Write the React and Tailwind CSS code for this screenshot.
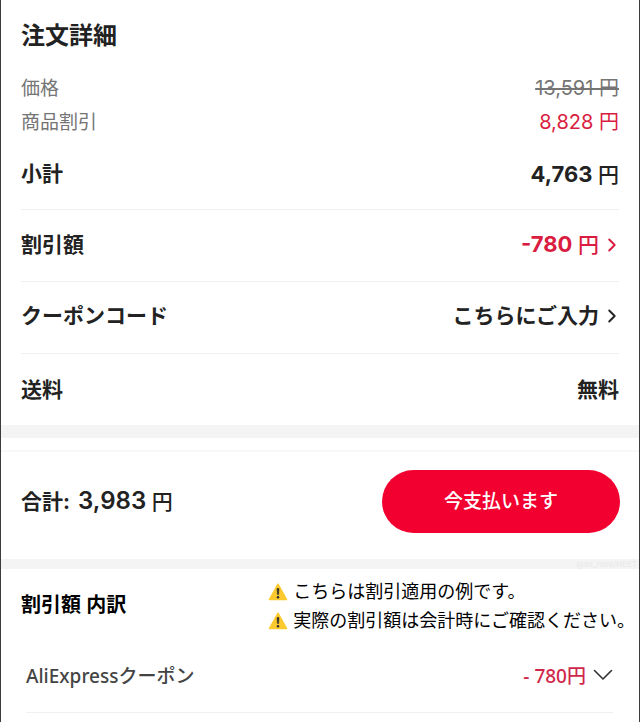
import React from 'react';

const WarningIcon = () => (
  <svg viewBox="0 0 20 18" className="h-[18px] w-5 shrink-0" aria-hidden="true">
    <path d="M10 1.2 18.6 16.6H1.4Z" fill="#fcc92e" stroke="#fcc92e" strokeWidth="1.4" strokeLinejoin="round" />
    <path d="M9 5.6h2l-.4 6H9.4Z" fill="#2b2b2b" stroke="#2b2b2b" strokeWidth=".5" strokeLinejoin="round" />
    <circle cx="10" cy="14.2" r="1.2" fill="#2b2b2b" />
  </svg>
);

const ArrowRight = () => (
  <svg viewBox="0 0 12 14" className="h-3.5 w-3" fill="none" stroke="currentColor" aria-hidden="true">
    <path d="M2.2 1.5 7.7 7l-5.5 5.5" strokeWidth="1.9" strokeLinecap="round" strokeLinejoin="round" />
  </svg>
);

const ArrowDown = () => (
  <svg viewBox="0 0 20 14" className="h-3.5 w-5 text-[#333]" fill="none" stroke="currentColor" aria-hidden="true">
    <path d="M1.5 1.5 10 10l8.5-8.5" strokeWidth="1.6" strokeLinecap="round" strokeLinejoin="round" />
  </svg>
);

const notes = [
  'こちらは割引適用の例です。',
  '実際の割引額は会計時にご確認ください。',
];

const App = () => {
  return (
    <main className="min-h-screen overflow-hidden border-x border-[#3c3c40] bg-white font-['Inter','Noto_Sans_CJK_JP',sans-serif] text-[21px] leading-8 font-medium text-[#222]">
      <section className="px-5 pt-4">
        <h1 className="text-2xl leading-10 font-bold">注文詳細</h1>
        <dl>
          <div className="mt-4 flex items-baseline justify-between text-[19px] font-normal">
            <dt className="text-[#757575]">価格</dt>
            <dd className="text-xl leading-8 text-[#757575] line-through">13,591 円</dd>
          </div>
          <div className="mt-px flex items-baseline justify-between text-[19px] font-normal">
            <dt className="text-[#757575]">商品割引</dt>
            <dd className="text-xl leading-8 text-[#d91c40]">8,828 円</dd>
          </div>
          <div className="flex h-[71px] items-center justify-between border-b border-[#f0f0f0]">
            <dt className="font-bold">小計</dt>
            <dd>
              <span className="text-[22px] font-bold">4,763</span> 円
            </dd>
          </div>
          <div className="flex h-[72px] items-center justify-between border-b border-[#f0f0f0] pb-0.5">
            <dt className="font-bold">割引額</dt>
            <dd>
              <button className="flex items-center gap-2 text-[#d91c40]">
                <span>
                  <span className="text-[22px] font-bold">-780</span> 円
                </span>
                <ArrowRight />
              </button>
            </dd>
          </div>
          <div className="flex h-[72px] items-center justify-between border-b border-[#f0f0f0] pb-1">
            <dt className="font-bold">クーポンコード</dt>
            <dd>
              <button className="flex items-center gap-2 font-bold">
                こちらにご入力
                <ArrowRight />
              </button>
            </dd>
          </div>
          <div className="flex h-[71px] items-center justify-between">
            <dt className="font-bold">送料</dt>
            <dd className="font-bold">無料</dd>
          </div>
        </dl>
      </section>

      <div className="h-[13px] bg-[#f4f4f4]" />

      <section className="mt-3 flex h-[109px] items-center justify-between border-t-2 border-[#f8f8f8] pr-[19px] pb-2 pl-5">
        <p className="flex items-baseline gap-2">
          <span className="font-bold">合計:</span>
          <span>
            <span className="text-2xl leading-8 font-semibold">3,983</span> 円
          </span>
        </p>
        <button className="h-[63px] w-[238px] rounded-full bg-[#f10030] text-[19px] font-medium text-white">
          今支払います
        </button>
      </section>

      <div className="h-2.5 bg-[#f4f4f4] pr-0.5 text-right text-[8px] leading-[10px] font-normal text-[#e9e9e9]">
        @ax_rova/NEET
      </div>

      <section className="font-['Noto_Sans','Noto_Sans_CJK_JP',sans-serif]">
        <div className="flex items-center justify-between pt-2 pl-5">
          <h2 className="pb-0.5 text-[20px] font-bold text-black">割引額 内訳</h2>
          <ul className="pr-1 text-lg leading-[29px] font-normal whitespace-nowrap text-black">
            {notes.map((note) => (
              <li key={note} className="flex items-center gap-[5px]">
                <WarningIcon />
                {note}
              </li>
            ))}
          </ul>
        </div>
        <div className="mr-[26px] ml-[25px] flex h-[78px] items-center justify-between border-b border-[#f0f0f0] pt-1 text-[19px] text-[#444]">
          <span>AliExpressクーポン</span>
          <button className="flex items-center gap-[7px] text-[#d0284a]">
            - 780円
            <ArrowDown />
          </button>
        </div>
      </section>
    </main>
  );
};

export default App;
